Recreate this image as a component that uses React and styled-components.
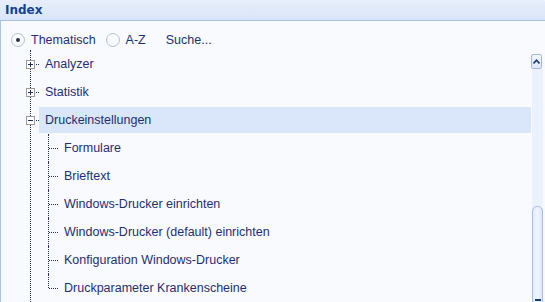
import React from "react";
import styled, { createGlobalStyle } from "styled-components";

const Global = createGlobalStyle`
  html, body { margin: 0; padding: 0; background: #f9fafe; }
  body { font-family: "Liberation Sans", Arial, sans-serif; }
`;

const Panel = styled.div`
  width: 545px;
  height: 302px;
  overflow: hidden;
  display: flex;
  flex-direction: column;
  background: #f9fafe;
`;

const Header = styled.div`
  height: 20px;
  flex: none;
  display: flex;
  align-items: center;
  padding-left: 5px;
  background: linear-gradient(#e7eefb, #d9e5f8);
  border-bottom: 1px solid #a9bfe2;
  border-top-right-radius: 2px;
  font-family: "DejaVu Sans", sans-serif;
  font-weight: bold;
  font-size: 12px;
  color: #15428b;
`;

const Body = styled.div`
  flex: 1;
  display: flex;
  min-height: 0;
  border-left: 1px solid #aec3e4;
`;

const Content = styled.div`
  flex: 1;
  display: flex;
  flex-direction: column;
  min-width: 0;
`;

const RadioRow = styled.div`
  height: 21px;
  padding-top: 8px;
  display: flex;
  align-items: center;
  padding-left: 10px;
  font-size: 12.5px;
  color: #1f2f6f;
`;

const RadioCircle = styled.span`
  width: 12px;
  height: 12px;
  border-radius: 50%;
  border: 1px solid #b7c3d6;
  background: radial-gradient(circle at 40% 35%, #ffffff, #f0f3f8);
  display: flex;
  align-items: center;
  justify-content: center;
  margin-left: ${(p) => p.$gap || 0}px;
  &::after {
    content: "";
    width: 4px;
    height: 4px;
    border-radius: 50%;
    background: ${(p) => (p.$checked ? "#27324a" : "transparent")};
  }
`;

const RadioLabel = styled.span`
  margin-left: 6px;
`;

const Search = styled.span`
  margin-left: 20px;
`;

const TreeList = styled.div`
  margin-left: 29px;
  border-left: 1px dotted #1f3060;
  display: flex;
  flex-direction: column;
`;

const Row = styled.div`
  height: 28px;
  display: flex;
  align-items: center;
  font-size: 12.5px;
  color: #1f2f6f;
`;

const Expander = styled.span`
  width: 7px;
  height: 7px;
  margin-left: -5px;
  border: 1px solid #9a9a9a;
  background: #fff;
  position: relative;
  flex: none;
  &::before {
    content: "";
    position: absolute;
    left: 1px;
    top: 3px;
    width: 5px;
    height: 1px;
    background: #1f3060;
  }
  &::after {
    content: "";
    position: absolute;
    left: 3px;
    top: 1px;
    width: 1px;
    height: 5px;
    background: ${(p) => (p.$open ? "transparent" : "#1f3060")};
  }
`;

const Connector = styled.span`
  width: ${(p) => p.$w}px;
  margin-left: ${(p) => p.$ml || 0}px;
  border-top: 1px dotted #1f3060;
  flex: none;
`;

const Label = styled.span`
  flex: 1;
  height: 26px;
  display: flex;
  align-items: center;
  padding-left: 6px;
  background: ${(p) => (p.$selected ? "#dae6fa" : "transparent")};
`;

const ChildRow = styled.div`
  height: 28px;
  display: flex;
  align-items: center;
  font-size: 12.5px;
  color: #1f2f6f;
  padding-left: 17px;
`;

const Guide = styled.span`
  align-self: ${(p) => (p.$last ? "flex-start" : "stretch")};
  height: ${(p) => (p.$last ? "14px" : "auto")};
  border-left: 1px dotted #1f3060;
  flex: none;
`;

const ChildLabel = styled.span`
  margin-left: 6px;
`;

const Scrollbar = styled.div`
  width: 14px;
  flex: none;
  display: flex;
  flex-direction: column;
`;

const UpButton = styled.div`
  margin-top: 33px;
  width: 9px;
  height: 13px;
  border: 1px solid #a4b9da;
  border-radius: 2px;
  background: linear-gradient(#f3f7fe, #dde8fa);
  display: flex;
  align-items: center;
  justify-content: center;
  flex: none;
`;

const Track = styled.div`
  flex: 1;
  width: 11px;
  margin-left: 1px;
  background: #ebf2fd;
  padding-top: 137px;
  display: flex;
  flex-direction: column;
`;

const Thumb = styled.div`
  height: 110px;
  box-sizing: border-box;
  border: 1px solid #a8bfe2;
  border-radius: 5px 5px 0 0;
  background: linear-gradient(90deg, #e2ebfb, #f0f5fe 50%, #dbe6f9);
  padding-top: 92px;
  display: flex;
  justify-content: center;
`;

const Grip = styled.span`
  width: 6px;
  height: 2px;
  background: #1f3a70;
`;

const topItems = ["Analyzer", "Statistik"];
const children = [
  "Formulare",
  "Brieftext",
  "Windows-Drucker einrichten",
  "Windows-Drucker (default) einrichten",
  "Konfiguration Windows-Drucker",
  "Druckparameter Krankenscheine",
];

export default function App() {
  return (
    <>
      <Global />
      <Panel>
        <Header>Index</Header>
        <Body>
          <Content>
            <RadioRow>
              <RadioCircle $checked />
              <RadioLabel>Thematisch</RadioLabel>
              <RadioCircle $gap={10} />
              <RadioLabel>A-Z</RadioLabel>
              <Search>Suche...</Search>
            </RadioRow>
            <TreeList>
              {topItems.map((t) => (
                <Row key={t}>
                  <Expander />
                  <Connector $w={3} $ml={1} />
                  <Label>{t}</Label>
                </Row>
              ))}
              <Row>
                <Expander $open />
                <Connector $w={3} $ml={1} />
                <Label $selected>Druckeinstellungen</Label>
              </Row>
              {children.map((c, i) => (
                <ChildRow key={c}>
                  <Guide $last={i === children.length - 1} />
                  <Connector $w={9} />
                  <ChildLabel>{c}</ChildLabel>
                </ChildRow>
              ))}
            </TreeList>
          </Content>
          <Scrollbar>
            <UpButton>
              <svg width="7" height="5" viewBox="0 0 7 5">
                <path d="M0.5 4.5 L3.5 1.2 L6.5 4.5" fill="none" stroke="#1f3a70" strokeWidth="1.6" />
              </svg>
            </UpButton>
            <Track>
              <Thumb>
                <Grip />
              </Thumb>
            </Track>
          </Scrollbar>
        </Body>
      </Panel>
    </>
  );
}
